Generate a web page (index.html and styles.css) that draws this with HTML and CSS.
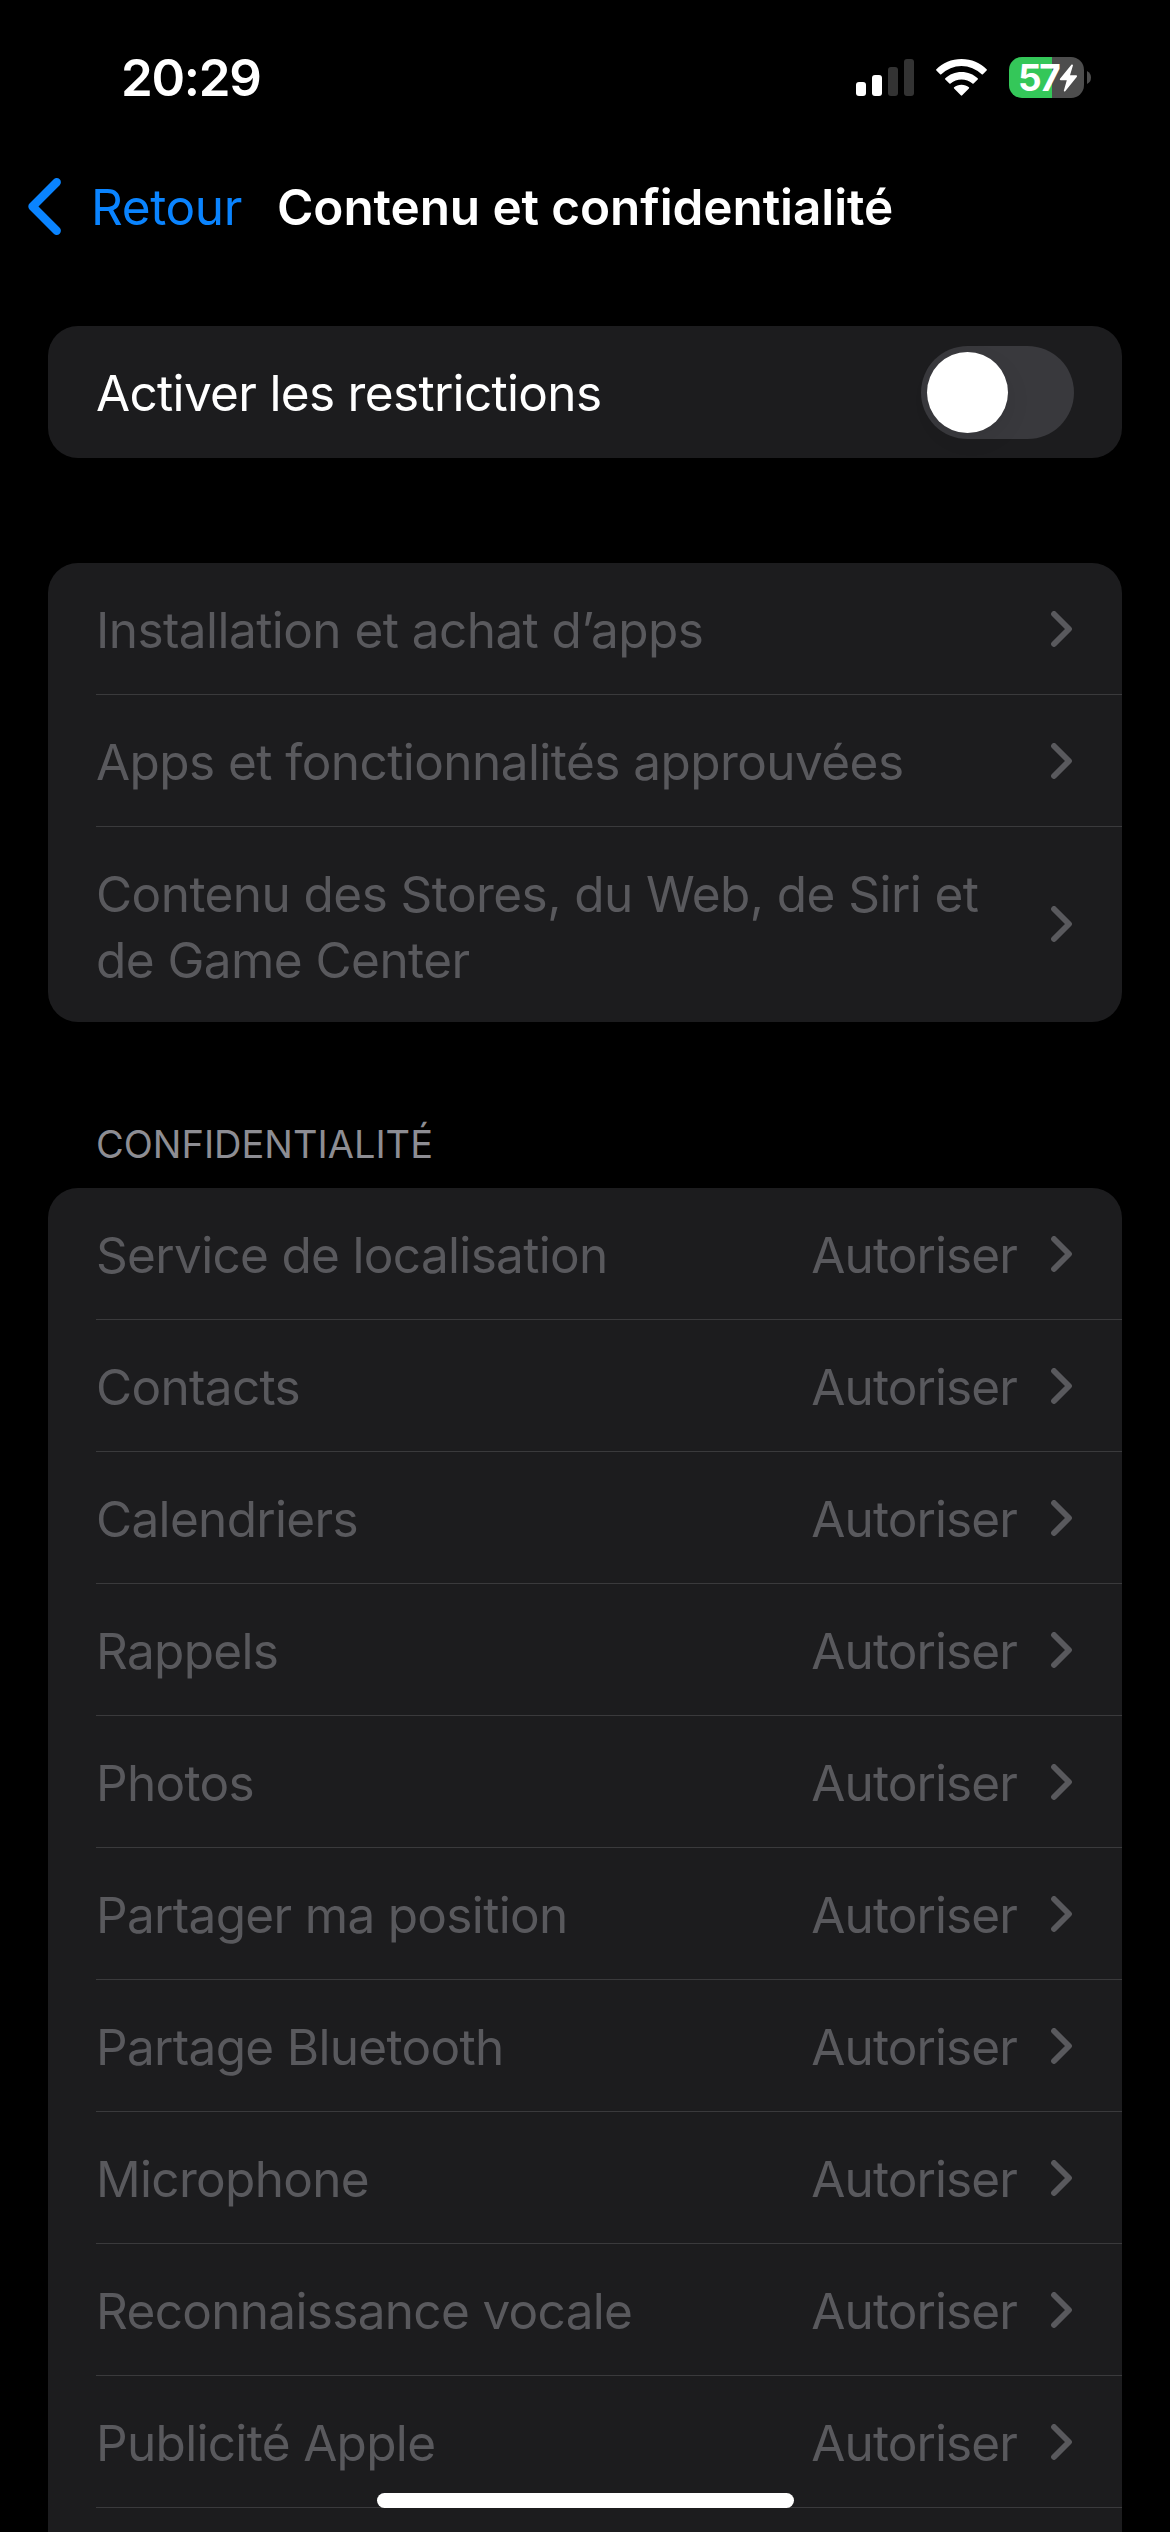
FILE: index.html
```html
<!DOCTYPE html>
<html lang="fr">
<head>
<meta charset="utf-8">
<title>Contenu et confidentialité</title>
<link rel="stylesheet" href="styles.css">
</head>
<body>
<svg class="defs" width="0" height="0" aria-hidden="true">
  <symbol id="chevron" viewBox="0 0 21 36"><path d="M3 3 18 18 3 33" fill="none" stroke="currentColor" stroke-width="5.8" stroke-linecap="round" stroke-linejoin="round"/></symbol>
</svg>
<div class="screen">
  <header class="status">
    <span class="time">20:29</span>
    <div class="indicators">
      <svg class="signal" viewBox="0 0 58 37"><g fill="#fff"><rect y="23" width="10" height="14" rx="3"/><rect x="16" y="16" width="10" height="21" rx="3"/></g><g fill="#333"><rect x="32" y="8" width="10" height="29" rx="3"/><rect x="48" width="10" height="37" rx="3"/></g></svg>
      <svg class="wifi" viewBox="0 0 51 37" fill="#fff"><path d="M25.500 0C35.500 0 44.400 4 50.600 10.300Q51.200 11 50.600 11.600L46.900 15.300Q46.300 15.900 45.700 15.300A28.800 28.800 0 0 0 5.300 15.300Q4.700 15.900 4.100 15.300L.4 11.600Q-.2 11 .4 10.300C6.600 4 15.500 0 25.500 0Z"/><path d="M25.500 12.900C31.800 12.900 37.500 15.300 41.700 19.200Q42.300 19.900 41.700 20.500L37.600 24.500Q37 25.100 36.400 24.500A16.500 16.500 0 0 0 14.600 24.500Q14 25.100 13.400 24.500L9.300 20.500Q8.700 19.900 9.300 19.200C13.500 15.300 19.200 12.900 25.500 12.900Z"/><path d="M25.500 25.700C28.400 25.700 31 26.700 32.900 28.300Q33.500 28.900 32.900 29.500L26.200 36.300Q25.500 37 24.800 36.300L18.100 29.500Q17.500 28.900 18.100 28.300C20 26.700 22.600 25.700 25.500 25.700Z"/></svg>
      <div class="battery">
        <div class="cell">
          <span class="level">57</span>
          <svg class="bolt" viewBox="0 0 19 28"><path d="M12.600.5 1 14.800Q.3 16.200 1.600 16.200H7.800L4.800 26.800Q5 28 6.200 27.200L17.900 12.700Q18.500 11.400 17.200 11.300H11L14 1.300Q13.800.1 12.600.5Z" fill="#fff"/></svg>
        </div>
        <svg class="nub" viewBox="0 0 4 13"><path d="M0 0Q4 2 4 6.500T0 13Z" fill="#4d4d4d"/></svg>
      </div>
    </div>
  </header>
  <nav class="navbar">
    <svg class="back-icon" viewBox="0 0 33 57"><path d="M28.700 4.300 4.500 28.500 28.700 52.700" fill="none" stroke="currentColor" stroke-width="8.400" stroke-linecap="round" stroke-linejoin="round"/></svg>
    <span class="back">Retour</span>
    <h1 class="title">Contenu et confidentialité</h1>
  </nav>
  <main>
    <section class="card">
      <div class="row active"><span class="label">Activer les restrictions</span><span class="toggle"><span class="knob"></span></span></div>
    </section>
    <section class="card menu">
      <div class="row"><span class="label">Installation et achat d’apps</span><svg class="chevron"><use href="#chevron"/></svg></div>
      <div class="row"><span class="label">Apps et fonctionnalités approuvées</span><svg class="chevron"><use href="#chevron"/></svg></div>
      <div class="row tall"><span class="label">Contenu des Stores, du Web, de Siri et<br>de Game Center</span><svg class="chevron"><use href="#chevron"/></svg></div>
    </section>
    <h2 class="section-title">CONFIDENTIALITÉ</h2>
    <section class="card last">
      <div class="row"><span class="label">Service de localisation</span><span class="value">Autoriser</span><svg class="chevron"><use href="#chevron"/></svg></div>
      <div class="row"><span class="label">Contacts</span><span class="value">Autoriser</span><svg class="chevron"><use href="#chevron"/></svg></div>
      <div class="row"><span class="label">Calendriers</span><span class="value">Autoriser</span><svg class="chevron"><use href="#chevron"/></svg></div>
      <div class="row"><span class="label">Rappels</span><span class="value">Autoriser</span><svg class="chevron"><use href="#chevron"/></svg></div>
      <div class="row"><span class="label">Photos</span><span class="value">Autoriser</span><svg class="chevron"><use href="#chevron"/></svg></div>
      <div class="row"><span class="label">Partager ma position</span><span class="value">Autoriser</span><svg class="chevron"><use href="#chevron"/></svg></div>
      <div class="row"><span class="label">Partage Bluetooth</span><span class="value">Autoriser</span><svg class="chevron"><use href="#chevron"/></svg></div>
      <div class="row"><span class="label">Microphone</span><span class="value">Autoriser</span><svg class="chevron"><use href="#chevron"/></svg></div>
      <div class="row"><span class="label">Reconnaissance vocale</span><span class="value">Autoriser</span><svg class="chevron"><use href="#chevron"/></svg></div>
      <div class="row"><span class="label">Publicité Apple</span><span class="value">Autoriser</span><svg class="chevron"><use href="#chevron"/></svg></div>
    </section>
  </main>
  <div class="home-indicator"></div>
</div>
</body>
</html>
```
FILE: styles.css
```css
* { box-sizing: border-box; }
body { margin: 0; background: #000; }
.defs { position: absolute; }
.screen {
  position: relative;
  width: 1170px;
  height: 2532px;
  overflow: hidden;
  background: #000;
  color: #fff;
  font-family: Inter, "Liberation Sans", sans-serif;
  font-size: 49.5px;
  line-height: 66px;
  white-space: nowrap;
}
.status {
  display: flex;
  justify-content: space-between;
  height: 141px;
  padding: 45px 79px 0 121px;
}
.time { font-size: 51px; font-weight: 600; letter-spacing: -1.3px; }
.indicators { display: flex; align-items: flex-start; padding-top: 12px; }
.signal { width: 58px; height: 37px; margin-top: 2px; }
.wifi { width: 51px; height: 37px; margin: 2px 22px 0; }
.battery { display: flex; align-items: center; gap: 3px; }
.cell {
  display: flex;
  align-items: center;
  width: 75px;
  height: 41px;
  padding-left: 9px;
  border-radius: 13px;
  background: linear-gradient(90deg, #34c759 43px, #4d4d4d 43px);
}
.level { width: 41px; font-size: 37px; font-weight: 700; line-height: 41px; letter-spacing: -2.5px; }
.bolt { width: 19px; height: 28px; }
.nub { width: 4px; height: 13px; }
.navbar {
  display: flex;
  align-items: flex-start;
  height: 185px;
  padding: 33px 28px 0;
}
.back-icon { width: 33px; height: 57px; margin-top: 4px; color: #0a84ff; }
.back { width: 216px; padding-left: 30px; color: #0a84ff; letter-spacing: -0.4px; }
.title { margin: 0; font-size: 49.5px; font-weight: 600; letter-spacing: -0.1px; }
.card { margin: 0 48px; border-radius: 30px; background: #1c1c1e; color: #59595d; }
.menu { margin-top: 105px; }
.row {
  display: flex;
  align-items: center;
  height: 132px;
  padding: 2px 50px 0 48px;
  background: linear-gradient(#3a3a3c, #3a3a3c) 48px 100% / 100% 1px no-repeat;
}
.row.active { padding-right: 48px; color: #fff; background: none; }
.card:not(.last) .row:last-child { background: none; }
.row.tall { height: 195px; padding-top: 5px; }
.label { flex: 1; letter-spacing: -0.68px; }
.menu .label { letter-spacing: -0.56px; }
.value { margin-right: 34px; letter-spacing: -0.9px; }
.chevron { width: 21px; height: 36px; position: relative; top: -1px; color: #59595d; }
.tall .chevron { top: -3px; }
.toggle {
  width: 153px;
  height: 93px;
  margin-top: -1px;
  padding: 6px;
  border-radius: 47px;
  background: #39393d;
}
.knob {
  display: block;
  width: 81px;
  height: 81px;
  border-radius: 50%;
  background: #fff;
  box-shadow: 4px 8px 22px rgba(0, 0, 0, .06);
}
.section-title {
  height: 166px;
  margin: 0;
  padding: 98px 96px 0;
  color: #8d8d93;
  font-size: 38px;
  font-weight: 400;
  line-height: 48px;
}
.last { height: 1400px; }
.home-indicator {
  position: absolute;
  left: 377px;
  top: 2493px;
  width: 417px;
  height: 15px;
  border-radius: 8px;
  background: #fff;
}
```
